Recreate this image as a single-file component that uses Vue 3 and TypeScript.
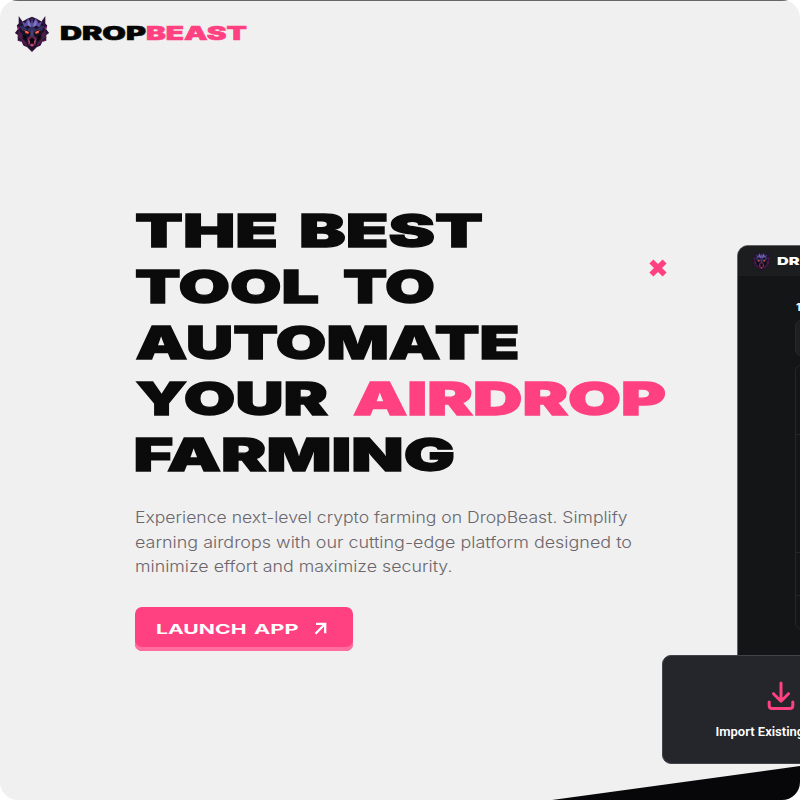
<script setup lang="ts">
import { defineComponent, h } from 'vue'

interface Word {
  text: string
  x: number
  y: number
  width: number
  accent?: boolean
}

const headline: Word[] = [
  { text: 'THE', x: 0, y: 48, width: 143 },
  { text: 'BEST', x: 164, y: 48, width: 184 },
  { text: 'TOOL', x: 0, y: 104, width: 184 },
  { text: 'TO', x: 208, y: 104, width: 92 },
  { text: 'AUTOMATE', x: 0.5, y: 160, width: 384 },
  { text: 'YOUR', x: 0.5, y: 216, width: 192.5 },
  { text: 'AIRDROP', x: 218, y: 216, width: 313, accent: true },
  { text: 'FARMING', x: -1.5, y: 272, width: 321.5 },
]

const intro = [
  { text: 'Experience next-level crypto farming on DropBeast. Simplify', width: 492.5 },
  { text: 'earning airdrops with our cutting-edge platform designed to', width: 497 },
  { text: 'minimize effort and maximize security.', width: 317.5 },
]

const shapes: [string, string][] = [
  ['#2b1238', 'M4 2 8 8 13 5 18 3 23 5 28 8 32 2 32 10 34 12 33 16 36 20 33 22 33 28 29 29 27 33 23 35 18 40 13 35 9 33 7 29 3 28 3 22 0 20 3 16 2 12 4 10Z'],
  ['#151225', 'M6 11 18 7 30 11 31 23 27 30 22 34 18 37 14 34 9 30 5 23Z'],
  ['#5c529f', 'M7 7 11 10 14 4 17 10 18 3 19 10 22 4 25 10 29 7 26 14 22 12 18 15 14 12 10 14Z'],
  ['#342e60', 'M5 13 9 12 13 16 18 13 23 16 27 12 31 13 28 18 23 17 18 21 13 17 8 18Z'],
  ['#8878c9', 'M13 8 15 7 17 14 14 12ZM23 8 21 7 19 14 22 12Z'],
  ['#4a4075', 'M17 17 19 17 20 23 18 25 16 23Z'],
  ['#4d1c48', 'M4 17 8 21 8 26 12 30 14 35 8 30 6 26 3 25ZM32 17 28 21 28 26 24 30 22 35 28 30 30 26 33 25Z'],
  ['#712050', 'M13 25 16 23 18 26 20 23 23 25 22 32 18 35 14 32Z'],
  ['#090811', 'M15 27 18 25 21 27 20 31 16 31ZM9 22 12 23 12 28 9 25ZM27 22 24 23 24 28 27 25Z'],
  ['#b75470', 'M14 26 15 32 16 29ZM22 26 21 32 20 29ZM16 33 18 31 20 33 18 34Z'],
  ['#ff492f', 'M10 17 15 19 14 21 11 20ZM26 17 21 19 22 21 25 20Z'],
  ['#ff9a67', 'M11 18 14 19 13 20ZM25 18 22 19 23 20Z'],
  ['#8b2776', 'M2 13 5 14 4 17ZM34 13 31 14 32 17ZM4 27 7 29 5 29ZM32 27 29 29 31 29Z'],
]

const BeastIcon = defineComponent({
  render: () =>
    h('svg', { viewBox: '0 0 36 41', 'aria-hidden': 'true' },
      shapes.map(([fill, d]) => h('path', { fill, d }))),
})
</script>

<template>
  <main class="page">
    <header class="header">
      <BeastIcon class="beast" />
      <svg class="brand" width="190" height="24">
        <text x="0" y="19" textLength="86" lengthAdjust="spacingAndGlyphs">DROP</text>
        <text class="accent" x="86" y="19" textLength="101" lengthAdjust="spacingAndGlyphs">BEAST</text>
      </svg>
    </header>

    <section class="hero">
      <h1>
        <svg class="headline" width="540" height="290">
          <text
            v-for="word in headline"
            :key="word.text"
            :class="{ accent: word.accent }"
            :x="word.x"
            :y="word.y"
            :textLength="word.width"
            lengthAdjust="spacingAndGlyphs"
          >{{ word.text }}</text>
        </svg>
      </h1>
      <p class="intro">
        <svg v-for="line in intro" :key="line.text" width="510" height="24.4">
          <text x="0" y="17" :textLength="line.width" lengthAdjust="spacingAndGlyphs">{{ line.text }}</text>
        </svg>
      </p>
      <button class="launch" type="button">
        <svg class="launch-label" width="144" height="18">
          <text x="0" y="14" textLength="90.5" lengthAdjust="spacingAndGlyphs">LAUNCH</text>
          <text x="98" y="14" textLength="44.5" lengthAdjust="spacingAndGlyphs">APP</text>
        </svg>
        <svg class="arrow" width="13" height="13" viewBox="0 0 13 13">
          <path d="M2 1.8H11.2V11.2M11 2 1.5 11.7" />
        </svg>
      </button>
    </section>

    <svg class="cross" viewBox="0 0 18 18"><path d="m2.4 2.4 13.2 13.2M15.6 2.4 2.4 15.6" /></svg>

    <aside class="window">
      <div class="window-bar">
        <BeastIcon class="window-beast" />
        <svg class="window-brand" width="100" height="14">
          <text x="0" y="11" textLength="46" lengthAdjust="spacingAndGlyphs">DROP</text>
        </svg>
      </div>
      <div class="window-body">
        <div class="step">1</div>
        <div class="field"></div>
        <div class="table">
          <div class="row first"></div>
          <div class="row second"></div>
          <div class="row third"></div>
        </div>
      </div>
    </aside>
    <div class="slope"></div>
    <aside class="import">
      <svg width="28" height="30" viewBox="0 0 28 30">
        <path d="M14 2V20M6.5 12.7 14 20.2 21.5 12.7M2.2 21V24.5Q2.2 27.5 5.2 27.5H22.8Q25.8 27.5 25.8 24.5V21" />
      </svg>
      <span>Import Existing</span>
    </aside>
  </main>
</template>

<style>
body { margin: 0; background: #fff; }
</style>

<style scoped>
.page {
  position: relative;
  width: 800px;
  height: 800px;
  overflow: hidden;
  box-sizing: border-box;
  border-radius: 18px;
  background: linear-gradient(#69666a 1px, #f0f0f0 1px);
  font-family: Inter, "Liberation Sans", sans-serif;
}
svg { display: block; overflow: visible; }
.header { display: flex; align-items: center; gap: 9.7px; padding: 13px 14px 0; height: 41px; }
.beast { width: 36px; height: 39px; }
.brand { margin-top: -2px; font-size: 18.8px; font-weight: 900; fill: #050505; stroke: #050505; stroke-width: .55px; }
.hero { padding: 145.4px 0 0 135px; }
h1 { margin: 0; }
.headline { font-size: 44.7px; font-weight: 900; fill: #0b0b0b; stroke: #0b0b0b; stroke-width: 1.3px; }
.accent { fill: #ff4081; stroke: #ff4081; }
.intro { margin: 17px 0 0; font-size: 15.5px; font-weight: 340; fill: #6b666c; }
.launch {
  display: flex;
  align-items: center;
  gap: 14px;
  width: 218px;
  height: 44px;
  box-sizing: border-box;
  margin-top: 27.5px;
  padding: 0 21px 1px;
  border: 0;
  box-shadow: inset 0 -4px #ff6e9f;
  border-radius: 7px;
  background: #ff4081;
}
.launch-label { font-family: Inter, sans-serif; font-size: 13.2px; font-weight: 700; fill: #fff; }
.arrow { fill: none; stroke: #fff; stroke-width: 2.3px; }
.cross { position: absolute; left: 649px; top: 259px; width: 18px; height: 18px; fill: none; stroke: #ff4081; stroke-width: 5.7px; }
.window {
  position: absolute;
  left: 737px;
  top: 245px;
  width: 700px;
  height: 450px;
  box-sizing: border-box;
  border: 1px solid #626466;
  border-radius: 11px;
  overflow: hidden;
  background: #141517;
}
.window-bar { display: flex; align-items: center; gap: 6px; height: 30px; padding-left: 14px; background: #1b1d1f; }
.window-beast { width: 19px; height: 21px; opacity: .9; }
.window-brand { font-size: 11px; font-weight: 900; fill: #fff; }
.window-body { padding: 24px 0 0 57px; }
.step { height: 15px; padding-left: 1px; color: #f6f6f6; font-size: 11px; line-height: 15px; font-weight: 700; }
.field { height: 34px; margin-top: 5px; border: 1px solid #26282b; border-radius: 6px; background: #1d1f21; }
.table { height: 262px; margin-top: 9px; border: 1px solid #242628; border-radius: 6px; }
.row { box-sizing: border-box; border-bottom: 1px solid #242628; }
.first { height: 69px; }
.second { height: 118px; }
.third { height: 43px; }
.import {
  position: absolute;
  left: 662px;
  top: 655px;
  display: flex;
  flex-direction: column;
  align-items: flex-start;
  gap: 12px;
  width: 236px;
  height: 109px;
  box-sizing: border-box;
  padding: 25px 0 0 52.5px;
  border: 1px solid #424348;
  border-radius: 9px;
  background: #25262b;
  color: #fff;
  font: 600 13px/18px Roboto, sans-serif;
}
.import svg { margin-left: 51px; fill: none; stroke: #ff4081; stroke-width: 3px; stroke-linecap: round; stroke-linejoin: round; }
.slope { position: absolute; left: 552px; bottom: 0; width: 248px; height: 34px; background: #070709; clip-path: polygon(0 100%, 100% 0, 100% 100%); }
</style>
